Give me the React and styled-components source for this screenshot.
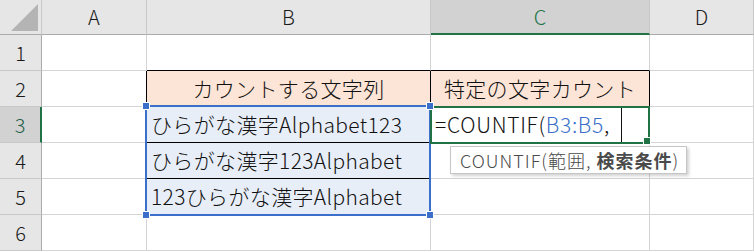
import React from 'react';
import styled, { createGlobalStyle } from 'styled-components';

const Global = createGlobalStyle`
  html, body { margin: 0; padding: 0; background: #ffffff; }
  body { font-family: "Noto Sans CJK JP", "Noto Sans", sans-serif; }
`;

const GREEN = '#217346';
const BLUE = '#3b6fc9';
const GRID = '#d4d4d4';

const Sheet = styled.div`
  position: relative;
  width: 754px;
  height: 252px;
  overflow: hidden;
  display: grid;
  grid-template-columns: 42px 105px 284px 219px 104px;
  grid-template-rows: 35px repeat(6, 36px);
  background: #ffffff;
`;

const Corner = styled.div`
  box-sizing: border-box;
  background: #e6e6e6;
  border-right: 1px solid #c8c8c8;
  border-bottom: 1px solid #ababab;
  display: flex;
  align-items: flex-end;
  justify-content: flex-end;
  padding: 0 2px 2px 0;
`;

const ColHeader = styled.div`
  box-sizing: border-box;
  background: ${p => (p.$active ? '#d2d2d2' : '#e6e6e6')};
  color: ${p => (p.$active ? GREEN : '#1a1a1a')};
  border-right: 1px solid #c8c8c8;
  border-bottom: ${p => (p.$active ? `2px solid ${GREEN}` : '1px solid #ababab')};
  display: flex;
  align-items: center;
  justify-content: center;
  font-size: 20px;
  font-weight: 300;
  line-height: 1;
  padding-top: ${p => (p.$active ? '1px' : '0')};
`;

const RowHeader = styled.div`
  box-sizing: border-box;
  background: ${p => (p.$active ? '#d2d2d2' : '#e6e6e6')};
  color: ${p => (p.$active ? '#1f5f4a' : '#1a1a1a')};
  border-right: ${p => (p.$active ? `2px solid ${GREEN}` : '1px solid #ababab')};
  border-bottom: 1px solid #c8c8c8;
  display: flex;
  align-items: center;
  justify-content: center;
  font-size: 20px;
  font-weight: 300;
  line-height: 1;
`;

const Cell = styled.div`
  box-sizing: border-box;
  background: ${p => p.$fill || '#ffffff'};
  border-right: 1px solid ${p => p.$rb || GRID};
  border-bottom: 1px solid ${p => p.$bb || GRID};
  display: flex;
  align-items: center;
  justify-content: ${p => (p.$center ? 'center' : 'flex-start')};
  padding: 0 4px;
  font-size: 21px;
  font-weight: 300;
  letter-spacing: ${p => p.$ls || '0.35px'};
  line-height: 1;
  color: #111111;
  white-space: nowrap;
  overflow: visible;
`;

const Ref = styled.span`
  color: ${BLUE};
`;

const RefRange = styled.div`
  position: absolute;
  left: 145px;
  top: 105px;
  width: 286px;
  height: 111px;
  box-sizing: border-box;
  border: 2px solid ${BLUE};
  pointer-events: none;
`;

const Handle = styled.div`
  position: absolute;
  width: 6px;
  height: 6px;
  background: ${p => p.$color};
  box-shadow: 0 0 0 1px #ffffff;
  left: ${p => p.$x}px;
  top: ${p => p.$y}px;
  z-index: 3;
`;

const ActiveBox = styled.div`
  position: absolute;
  left: 430px;
  top: 106px;
  width: 220px;
  height: 38px;
  box-sizing: border-box;
  border: 2px solid ${GREEN};
  pointer-events: none;
  z-index: 2;
`;

const Caret = styled.div`
  position: absolute;
  left: 621px;
  top: 108px;
  width: 1px;
  height: 34px;
  background: #111111;
`;

const Tooltip = styled.div`
  position: absolute;
  left: 450px;
  top: 146px;
  width: 237px;
  height: 28px;
  box-sizing: border-box;
  background: #ffffff;
  border: 1px solid #c6c6c6;
  box-shadow: 2px 2px 3px rgba(0, 0, 0, 0.18);
  display: flex;
  align-items: center;
  padding-left: 9px;
  font-size: 18px;
  font-weight: 300;
  letter-spacing: 1px;
  color: #4a4a4a;
  white-space: pre;
  z-index: 4;
`;

const Bold = styled.b`
  font-weight: 700;
  color: #4a4a4a;
`;

const CornerTriangle = () => (
  <svg width="28" height="28" viewBox="0 0 28 28">
    <polygon points="0,27 27,0 27,27" fill="#b4b4b4" />
  </svg>
);

const PEACH = '#fce4d6';
const SEL = '#e8eef8';
const K = '#000000';

export default function App() {
  return (
    <>
      <Global />
      <Sheet>
        <Corner><CornerTriangle /></Corner>
        <ColHeader>A</ColHeader>
        <ColHeader>B</ColHeader>
        <ColHeader $active>C</ColHeader>
        <ColHeader>D</ColHeader>

        <RowHeader>1</RowHeader>
        <Cell />
        <Cell $bb={K} />
        <Cell $bb={K} />
        <Cell />

        <RowHeader>2</RowHeader>
        <Cell $rb={K} />
        <Cell $fill={PEACH} $rb={K} $bb={K} $center>カウントする文字列</Cell>
        <Cell $fill={PEACH} $rb={K} $bb={K} $center>特定の文字カウント</Cell>
        <Cell />

        <RowHeader $active>3</RowHeader>
        <Cell $rb={K} />
        <Cell $fill={SEL} $rb={K} $bb={K}>ひらがな漢字Alphabet123</Cell>
        <Cell $ls="0.7px">=COUNTIF(<Ref>B3:B5</Ref>,</Cell>
        <Cell />

        <RowHeader>4</RowHeader>
        <Cell $rb={K} />
        <Cell $fill={SEL} $rb={K} $bb={K}>ひらがな漢字123Alphabet</Cell>
        <Cell />
        <Cell />

        <RowHeader>5</RowHeader>
        <Cell $rb={K} />
        <Cell $fill={SEL} $rb={K} $bb={K}>123ひらがな漢字Alphabet</Cell>
        <Cell />
        <Cell />

        <RowHeader>6</RowHeader>
        <Cell />
        <Cell />
        <Cell />
        <Cell />

        <RefRange />
        <ActiveBox />
        <Caret />
        <Handle $color={BLUE} $x={143} $y={103} />
        <Handle $color={BLUE} $x={427} $y={103} />
        <Handle $color={BLUE} $x={143} $y={212} />
        <Handle $color={BLUE} $x={427} $y={212} />
        <Handle $color={GREEN} $x={644} $y={138} />
        <Tooltip>COUNTIF(範囲, <Bold>検索条件</Bold>)</Tooltip>
      </Sheet>
    </>
  );
}
